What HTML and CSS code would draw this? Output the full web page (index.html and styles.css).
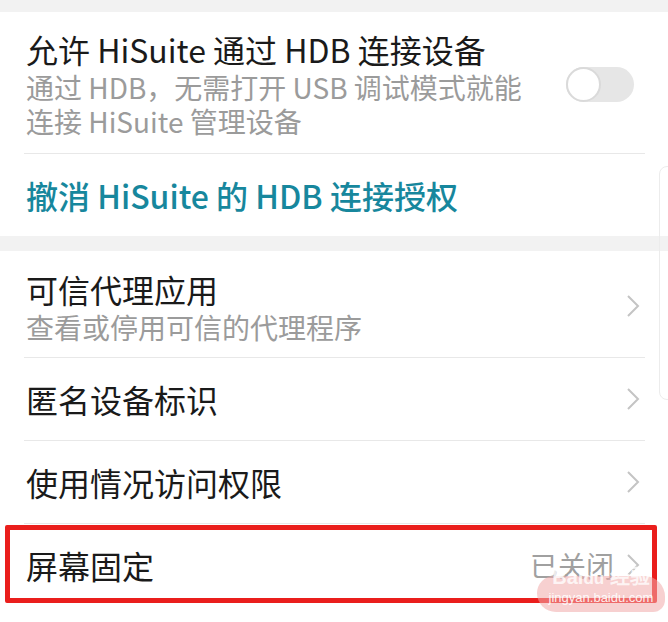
FILE: index.html
```html
<!DOCTYPE html>
<html lang="zh-CN">
<head>
    <meta charset="UTF-8">
    <meta name="viewport" content="width=device-width, initial-scale=1.0">
    <title>安全设置</title>
    <link rel="stylesheet" href="styles.css">
</head>
<body>
    <div class="gap gap-top"></div>

    <div class="group">
        <div class="row row-switch">
            <div class="row-text">
                <div class="row-title">允许 HiSuite 通过 HDB 连接设备</div>
                <div class="row-sub">通过 HDB，无需打开 USB 调试模式就能</div>
                <div class="row-sub">连接 HiSuite 管理设备</div>
            </div>
            <div class="switch"><span class="knob"></span></div>
        </div>
        <div class="row row-link">
            <div class="row-title link">撤消 HiSuite 的 HDB 连接授权</div>
        </div>
    </div>

    <div class="gap"></div>

    <div class="group">
        <div class="row row-two">
            <div class="row-text">
                <div class="row-title">可信代理应用</div>
                <div class="row-sub">查看或停用可信的代理程序</div>
            </div>
            <svg class="chevron" viewBox="0 0 14 24"><polyline points="2,2 12,12 2,22"/></svg>
        </div>
        <div class="row row-one">
            <div class="row-title">匿名设备标识</div>
            <svg class="chevron" viewBox="0 0 14 24"><polyline points="2,2 12,12 2,22"/></svg>
        </div>
        <div class="row row-one">
            <div class="row-title">使用情况访问权限</div>
            <svg class="chevron" viewBox="0 0 14 24"><polyline points="2,2 12,12 2,22"/></svg>
        </div>
        <div class="row row-one row-last marked">
            <div class="row-title">屏幕固定</div>
            <div class="row-value">已关闭</div>
            <svg class="chevron" viewBox="0 0 14 24"><polyline points="2,2 12,12 2,22"/></svg>
            <div class="watermark">
                <span class="wm-logo">Bai<b>du</b> 经验</span>
                <span class="wm-url">jingyan.baidu.com</span>
            </div>
        </div>
    </div>

    <div class="scroll-edge"></div>
</body>
</html>
```

FILE: styles.css
```css
html {
    overflow: hidden;
}
body {
    margin: 0;
    min-height: 100vh;
    background: #fff;
    font-family: "Noto Sans CJK SC", "Noto Sans", sans-serif;
    color: #1a1a1a;
    position: relative;
    overflow: hidden;
}
.gap {
    height: 15px;
    background: #f2f2f2;
}
.gap-top {
    height: 12px;
}
.group {
    background: #fff;
}
.row {
    display: flex;
    align-items: center;
    margin: 0 23px 0 24px;
    padding: 0 2px;
    border-bottom: 1px solid #e8e8e8;
    position: relative;
}
.row-text {
    flex: 1;
}
.row-title {
    flex: 1;
    font-size: 32px;
    line-height: 42px;
}
.row-sub {
    font-size: 28px;
    line-height: 34px;
    color: #9b9b9b;
}
.row-switch {
    padding-top: 16px;
    padding-bottom: 15px;
}
.row-link {
    padding-top: 20px;
    padding-bottom: 20px;
    border-bottom: none;
}
.link {
    color: #17879d;
    font-weight: 500;
}
.row-two {
    padding-top: 17px;
    padding-bottom: 13px;
}
.row-one {
    padding-top: 20px;
    padding-bottom: 20px;
}
.row-last {
    border-bottom: none;
}
.row-value {
    font-size: 28px;
    color: #a0a0a0;
    margin-right: 12px;
}
.switch {
    width: 68px;
    height: 35px;
    border-radius: 18px;
    background: #e6e6e6;
    margin-right: 9px;
    margin-top: 2px;
    position: relative;
}
.knob {
    position: absolute;
    left: 0;
    top: 0;
    width: 31px;
    height: 31px;
    border-radius: 50%;
    background: #fff;
    border: 2px solid #dadada;
}
.chevron {
    width: 14px;
    height: 24px;
    margin-right: 3px;
    fill: none;
    stroke: #c4c4c4;
    stroke-width: 2;
}
.marked::after {
    content: "";
    position: absolute;
    left: -19px;
    right: -12px;
    top: 1px;
    bottom: 3px;
    border: 5px solid #ea1e1c;
    border-radius: 2px;
}
.watermark {
    position: absolute;
    right: -20px;
    top: 52px;
    width: 128px;
    height: 36px;
    background: rgba(240, 170, 170, 0.55);
    border-radius: 20px 24px 14px 22px;
    display: flex;
    flex-direction: column;
    align-items: center;
    font-family: "Liberation Sans", sans-serif;
    color: rgba(255, 255, 255, 0.9);
    z-index: 2;
}
.wm-logo {
    font-size: 20px;
    line-height: 18px;
    margin-top: -8px;
    color: rgba(255, 255, 255, 0.8);
    font-weight: 700;
}
.wm-logo b {
    font-size: 17px;
}
.wm-url {
    font-size: 13px;
    line-height: 20px;
}
.scroll-edge {
    position: absolute;
    left: 659px;
    top: 166px;
    width: 14px;
    height: 232px;
    border: 1px solid #ececec;
    border-radius: 8px;
}
```
